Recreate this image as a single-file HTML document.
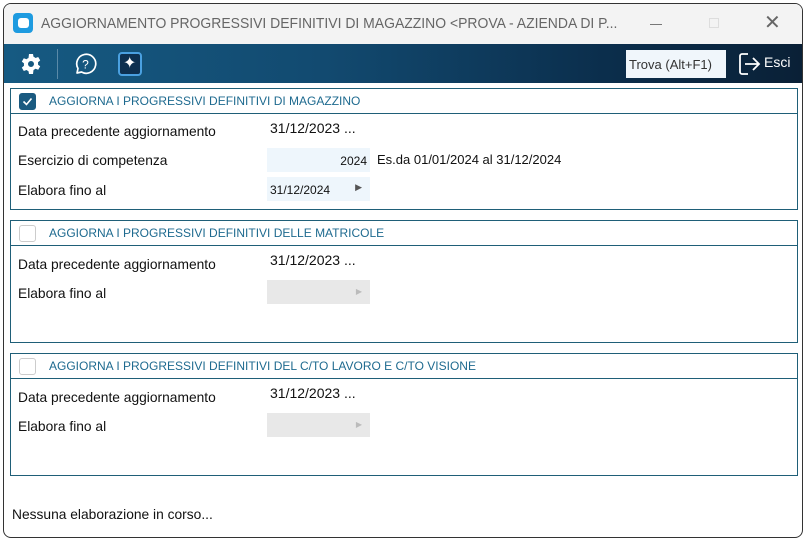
<!DOCTYPE html>
<html><head><meta charset="utf-8"><style>
*{margin:0;padding:0;box-sizing:border-box}
body{width:806px;height:541px;background:#fff;font-family:"Liberation Sans",sans-serif;position:relative;overflow:hidden}
.win{position:absolute;left:3px;top:3px;width:800px;height:535px;border:1px solid #333;border-radius:8px;overflow:hidden;background:#fff}
.title{position:absolute;left:0;top:0;width:800px;height:40px;background:#f3f3f3}
.title .t{position:absolute;left:37px;top:11px;font-size:15px;color:#666;white-space:nowrap;transform:scaleX(.93);transform-origin:left}
.tb{position:absolute;left:0;top:40px;width:800px;height:39px;background:linear-gradient(90deg,#165a82 0%,#124a70 40%,#0b2e4c 75%,#0a2036 100%)}
.abs{position:absolute}
.grp{position:absolute;left:6px;width:788px;border:1px solid #1f5f78}
.hdr{position:absolute;left:0;top:0;width:100%;height:25px;border-bottom:1px solid #1f5f78}
.hdr span{position:absolute;left:38px;top:5px;font-size:12px;color:#1e6a8f;white-space:nowrap}
.cb{position:absolute;left:8px;top:4px;width:17px;height:17px;border:1px solid #ccc;border-radius:3px;background:#fff}
.lbl{position:absolute;font-size:14px;color:#111;white-space:nowrap;transform:scaleX(.985);transform-origin:left}
.val{position:absolute;font-size:14px;color:#111;white-space:nowrap}
.fld{position:absolute;width:103px;height:24px;font-size:12px;color:#111}
</style></head><body>
<div class="win">
 <div class="title">
  <div class="abs" style="left:9px;top:9px;width:20px;height:20px;background:#1e9be0;border-radius:4px"><div class="abs" style="left:5px;top:5px;width:11px;height:10px;background:#fff;border-radius:3px"></div></div>
  <div class="t">AGGIORNAMENTO PROGRESSIVI DEFINITIVI DI MAGAZZINO &lt;PROVA - AZIENDA DI P...</div>
  <div class="abs" style="left:646px;top:20px;width:12px;height:1px;background:#777"></div>
  <div class="abs" style="left:705px;top:14px;width:10px;height:10px;border:1px solid #ddd"></div>
  <div class="abs" style="left:760px;top:6px;font-size:20px;color:#666">✕</div>
 </div>
 <div class="tb">
  <svg class="abs" style="left:15px;top:8px" width="24" height="24" viewBox="0 0 24 24"><path fill="#fff" fill-rule="evenodd" d="M10 2h4l.5 2.8a8 8 0 012 1.2l2.7-1 2 3.4-2.2 1.8a8 8 0 010 2.4l2.2 1.8-2 3.4-2.7-1a8 8 0 01-2 1.2L14 22h-4l-.5-2.8a8 8 0 01-2-1.2l-2.7 1-2-3.4 2.2-1.8a8 8 0 010-2.4L2.8 9.6l2-3.4 2.7 1a8 8 0 012-1.2zM12 9a3 3 0 100 6 3 3 0 000-6z"/></svg>
  <div class="abs" style="left:53px;top:5px;width:1px;height:30px;background:#5a8aa8"></div>
  <svg class="abs" style="left:69px;top:8px" width="24" height="24" viewBox="0 0 24 24"><path d="M4 21l1-4.5A9.5 9.5 0 1 1 8.5 20Z" fill="none" stroke="#fff" stroke-width="1.7" stroke-linejoin="round"/><text x="12.5" y="16.5" font-size="12" fill="#fff" text-anchor="middle" font-family="Liberation Sans">?</text></svg>
  <div class="abs" style="left:114px;top:8px;width:24px;height:24px;border:2px solid #4aa0e0;border-radius:4px;background:#0d3050"><div class="abs" style="left:3px;top:-1px;color:#fff;font-size:16px">✦</div></div>
  <div class="abs" style="left:622px;top:6px;width:100px;height:28px;background:#f0f6fb;font-size:13px;color:#333;padding:7px 0 0 3px">Trova (Alt+F1)</div>
  <svg class="abs" style="left:734px;top:8px" width="24" height="24" viewBox="0 0 24 24"><path d="M10 2H4a2 2 0 00-2 2v16a2 2 0 002 2h6" fill="none" stroke="#fff" stroke-width="1.8"/><path d="M7 12h14M15 6l6 6-6 6" fill="none" stroke="#fff" stroke-width="1.8"/></svg>
  <div class="abs" style="left:760px;top:10px;color:#fff;font-size:14px">Esci</div>
 </div>

 <div class="grp" style="top:84px;height:122px">
  <div class="hdr"><div class="cb" style="background:#1a5a80;border-color:#1a5a80"><svg width="15" height="15" viewBox="0 0 15 15"><path d="M3.5 7.5l3 3 5-6" fill="none" stroke="#fff" stroke-width="1.6"/></svg></div><span>AGGIORNA I PROGRESSIVI DEFINITIVI DI MAGAZZINO</span></div>
  <div class="lbl" style="left:7px;top:34px">Data precedente aggiornamento</div>
  <div class="val" style="left:259px;top:31px">31/12/2023 ...</div>
  <div class="lbl" style="left:7px;top:63px">Esercizio di competenza</div>
  <div class="fld" style="left:256px;top:59px;background:#eef6fc;text-align:right;padding:6px 3px 0 0">2024</div>
  <div class="val" style="left:366px;top:63px;font-size:13px">Es.da 01/01/2024 al 31/12/2024</div>
  <div class="lbl" style="left:7px;top:93px">Elabora fino al</div>
  <div class="fld" style="left:256px;top:88px;background:#eef6fc;padding:6px 0 0 3px">31/12/2024<span style="position:absolute;right:8px;top:5px;font-size:9px;color:#555">▶</span></div>
 </div>

 <div class="grp" style="top:216px;height:123px">
  <div class="hdr"><div class="cb"></div><span>AGGIORNA I PROGRESSIVI DEFINITIVI DELLE MATRICOLE</span></div>
  <div class="lbl" style="left:7px;top:35px">Data precedente aggiornamento</div>
  <div class="val" style="left:259px;top:31px">31/12/2023 ...</div>
  <div class="lbl" style="left:7px;top:64px">Elabora fino al</div>
  <div class="fld" style="left:256px;top:59px;background:#e8e8e8"><span style="position:absolute;right:8px;top:7px;font-size:8px;color:#bbb">▶</span></div>
 </div>

 <div class="grp" style="top:349px;height:123px">
  <div class="hdr"><div class="cb"></div><span>AGGIORNA I PROGRESSIVI DEFINITIVI DEL C/TO LAVORO E C/TO VISIONE</span></div>
  <div class="lbl" style="left:7px;top:35px">Data precedente aggiornamento</div>
  <div class="val" style="left:259px;top:31px">31/12/2023 ...</div>
  <div class="lbl" style="left:7px;top:64px">Elabora fino al</div>
  <div class="fld" style="left:256px;top:59px;background:#e8e8e8"><span style="position:absolute;right:8px;top:7px;font-size:8px;color:#bbb">▶</span></div>
 </div>

 <div class="lbl" style="left:8px;top:502px">Nessuna elaborazione in corso...</div>
</div>
</body></html>
